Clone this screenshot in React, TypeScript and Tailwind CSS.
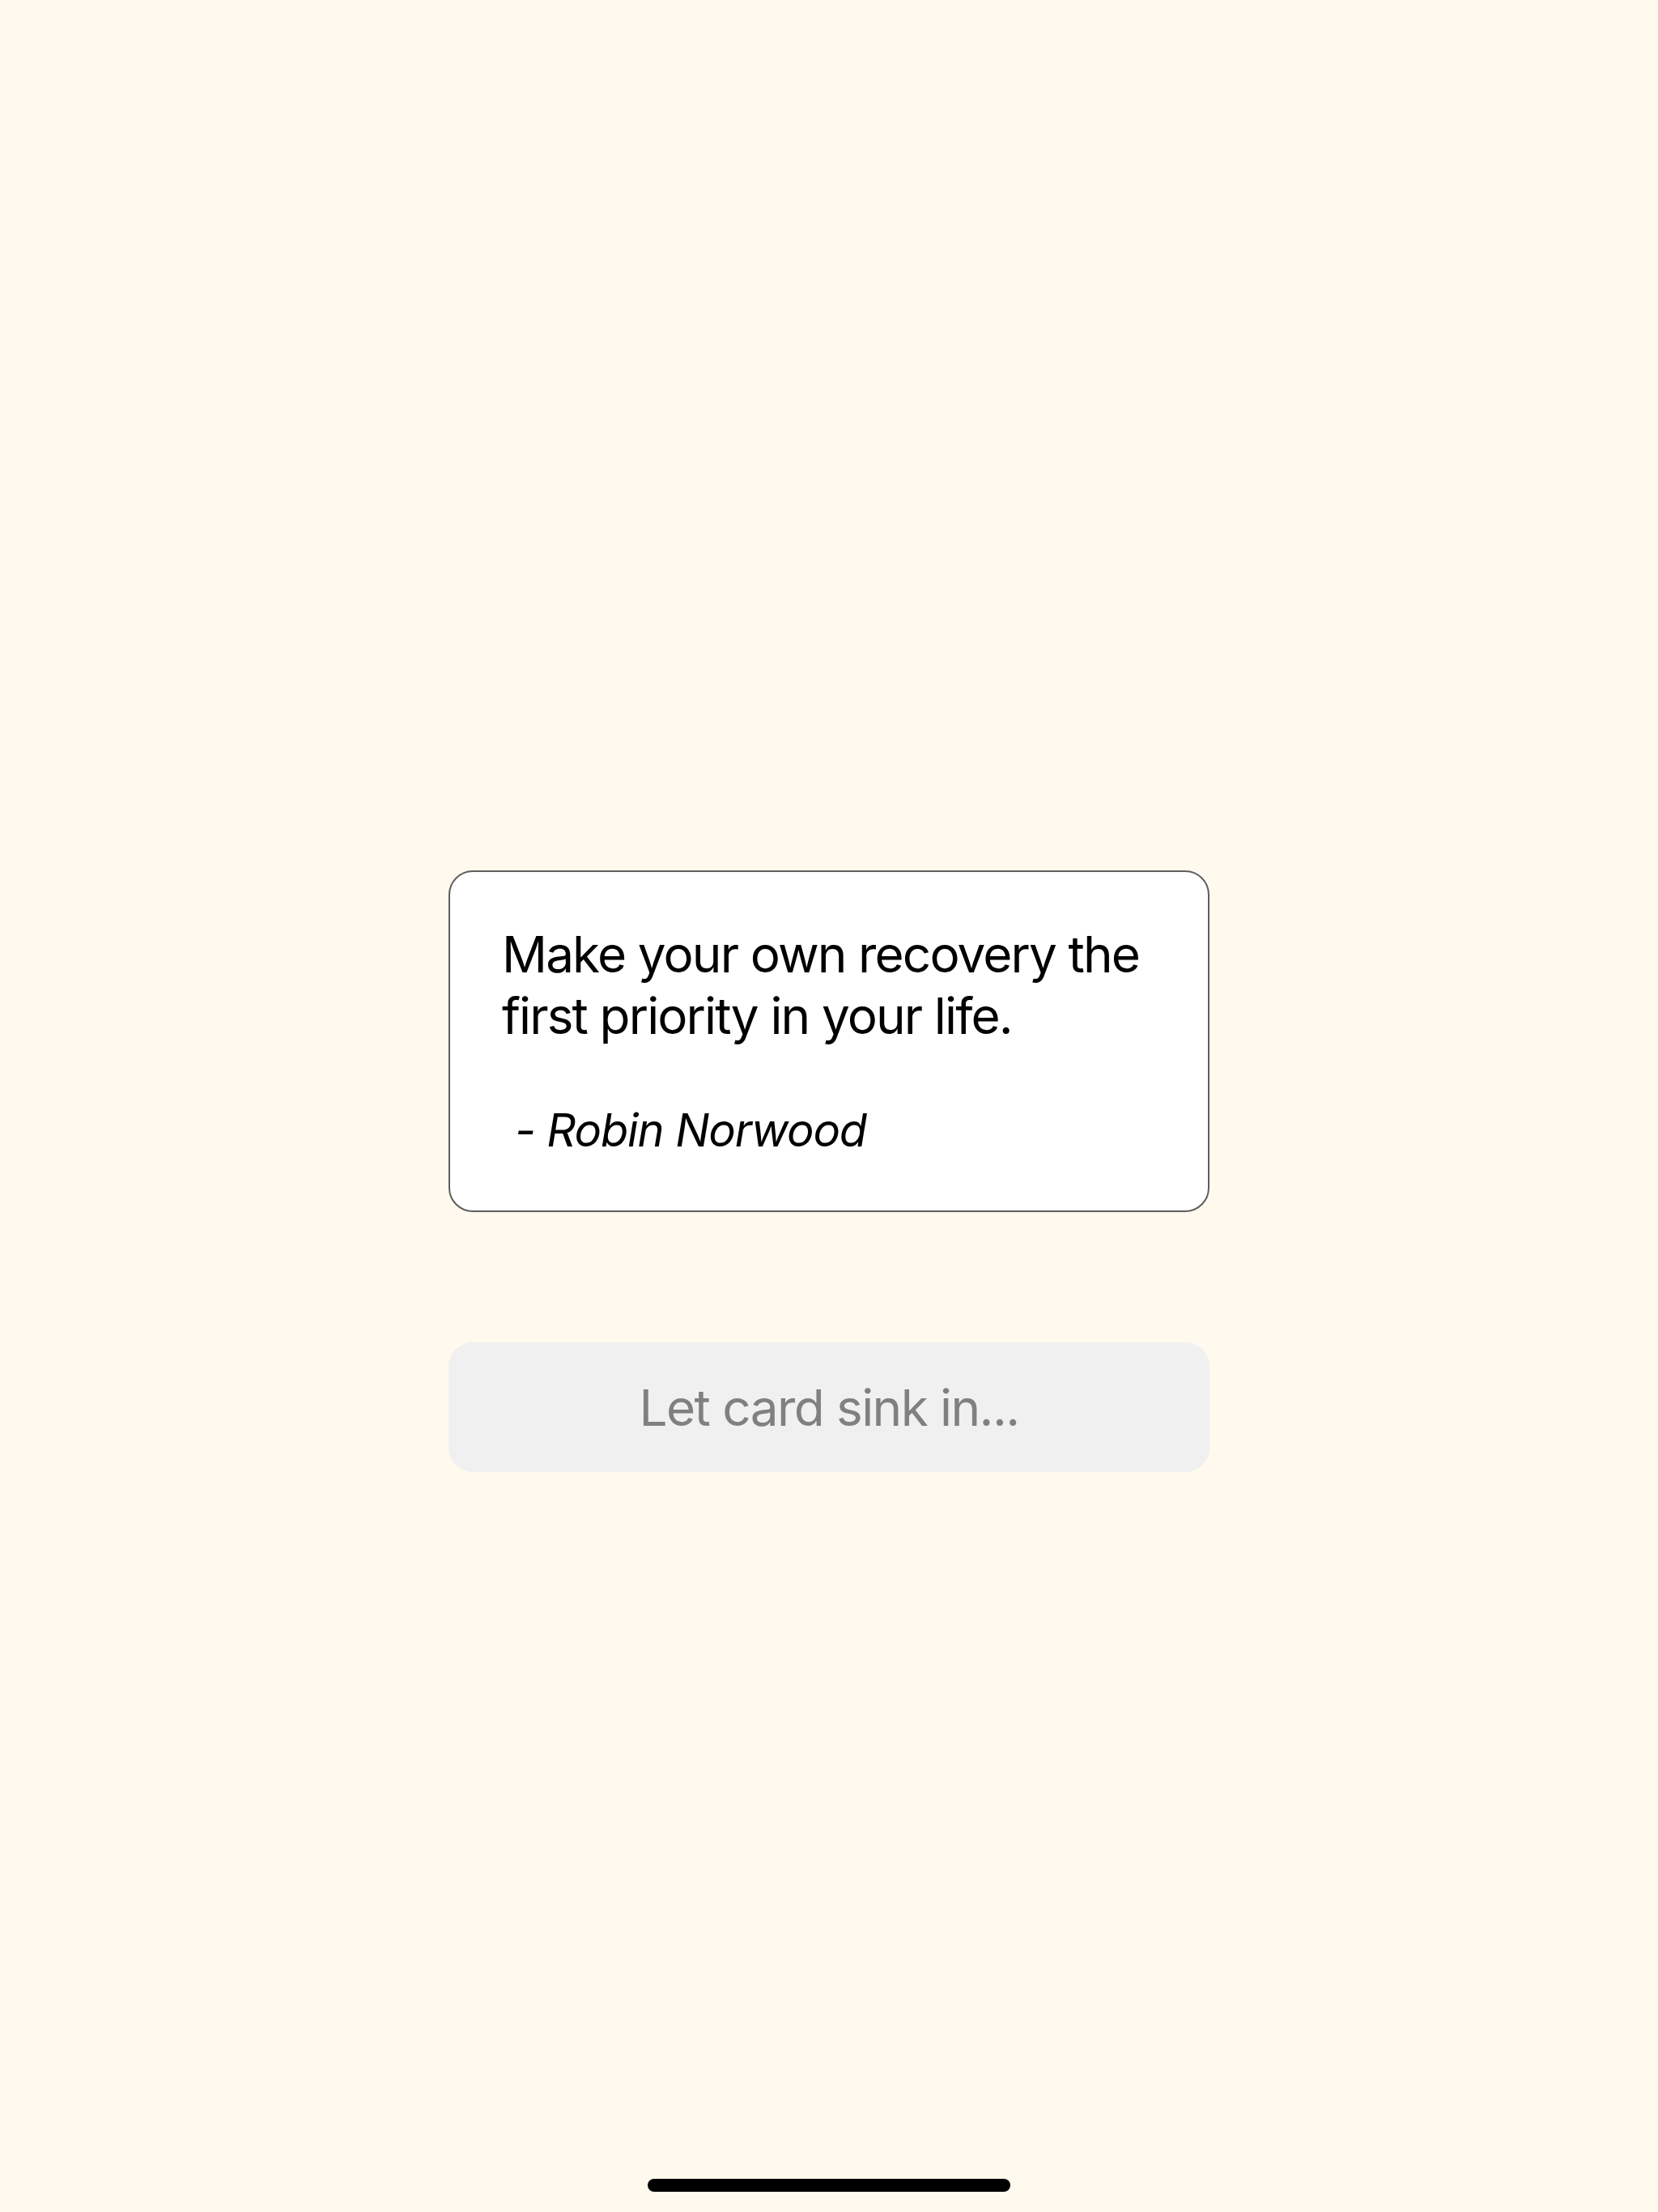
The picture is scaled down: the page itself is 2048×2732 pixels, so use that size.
import React from "react";

export default function App() {
  return (
    <div
      className="w-[2048px] h-[2732px] bg-[#fff9ee] flex flex-col items-center pt-[1075px]"
      style={{ fontFamily: "Inter, 'Noto Sans', sans-serif" }}
    >
      <div className="w-[940px] h-[422px] rounded-[30px] border-2 border-[#5e5e5e] bg-white pt-[64px] pl-[64px] pr-[40px] flex flex-col">
        <p className="text-[62px] leading-[76px] text-black tracking-[-0.03em]">
          Make your own recovery the
          <br />
          first priority in your life.
        </p>
        <p className="mt-[69px] pl-[16px] text-[56px] leading-[68px] italic text-black tracking-[-0.02em]">
          - Robin Norwood
        </p>
      </div>
      <button className="mt-[161px] w-[940px] h-[160px] rounded-[30px] bg-[#f0f0f0] flex items-center justify-center text-[62px] text-[#808080] tracking-[-0.025em]">
        Let card sink in...
      </button>
      <div className="mt-auto mb-[25px] w-[448px] h-[16px] rounded-full bg-black" />
    </div>
  );
}
